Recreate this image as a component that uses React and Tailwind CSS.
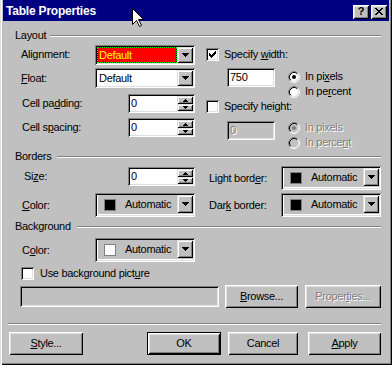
import React from "react";

const FONT = "font-['Liberation_Sans',Arial,sans-serif]";
const SUNKEN =
  "shadow-[inset_1px_1px_0_#808080,inset_-1px_-1px_0_#ffffff,inset_2px_2px_0_#000000,inset_-2px_-2px_0_#dfdfdf]";
const RAISED =
  "shadow-[inset_1px_1px_0_#ffffff,inset_-1px_-1px_0_#000000,inset_2px_2px_0_#dfdfdf,inset_-2px_-2px_0_#808080]";
const RAISED_SB =
  "shadow-[inset_1px_1px_0_#dfdfdf,inset_-1px_-1px_0_#000000,inset_2px_2px_0_#ffffff,inset_-2px_-2px_0_#808080]";
const DIS = "text-[#808080] [text-shadow:1px_1px_0_#ffffff]";

function DownTri() {
  return (
    <svg width="7" height="4" viewBox="0 0 7 4" className="block">
      <path d="M0 0h7v1H0zM1 1h5v1H1zM2 2h3v1H2zM3 3h1v1H3z" fill="#000" />
    </svg>
  );
}
function SmallUp() {
  return (
    <svg width="5" height="3" viewBox="0 0 5 3" className="block">
      <path d="M2 0h1v1H2zM1 1h3v1H1zM0 2h5v1H0z" fill="#000" />
    </svg>
  );
}
function SmallDown() {
  return (
    <svg width="5" height="3" viewBox="0 0 5 3" className="block">
      <path d="M0 0h5v1H0zM1 1h3v1H1zM2 2h1v1H2z" fill="#000" />
    </svg>
  );
}

function ArrowBtn() {
  return (
    <div className={`w-[16px] self-stretch bg-[#c0c0c0] flex items-center justify-center ${RAISED_SB}`}>
      <DownTri />
    </div>
  );
}

function Combo({ children }) {
  return (
    <div className={`w-[100px] h-[20px] p-[2px] flex shrink-0 ${SUNKEN}`}>
      {children}
      <ArrowBtn />
    </div>
  );
}

function Spin({ value }) {
  return (
    <div className={`w-[67px] h-[19px] p-[2px] flex shrink-0 ${SUNKEN}`}>
      <div className="flex-1 bg-white flex items-center pl-[1px]">{value}</div>
      <div className="w-[16px] flex flex-col">
        <div className={`h-[8px] bg-[#c0c0c0] flex items-center justify-center ${RAISED_SB}`}>
          <SmallUp />
        </div>
        <div className={`h-[7px] bg-[#c0c0c0] flex items-center justify-center ${RAISED_SB}`}>
          <SmallDown />
        </div>
      </div>
    </div>
  );
}

function ColorCombo({ swatch }) {
  return (
    <div className={`w-[100px] h-[24px] p-[2px] flex shrink-0 ${SUNKEN}`}>
      <div className="flex-1 flex items-center border-l border-b border-white bg-[#c0c0c0]">
        <div className={`w-[12px] h-[12px] ml-[6px] border border-[#808080] ${swatch}`} />
        <span className="ml-[9px]">Automatic</span>
        <div className={`ml-auto self-start w-[16px] h-[18px] bg-[#c0c0c0] flex items-center justify-center ${RAISED_SB}`}>
          <DownTri />
        </div>
      </div>
    </div>
  );
}

function Checkbox({ checked }) {
  return (
    <div className={`w-[13px] h-[13px] shrink-0 bg-white flex items-center justify-center ${SUNKEN}`}>
      {checked && (
        <svg width="7" height="7" viewBox="0 0 7 7" className="block">
          <path
            d="M6 0h1v1H6zM5 1h2v1H5zM0 2h1v1H0zM4 2h3v1H4zM0 3h2v1H0zM3 3h3v1H3zM0 4h5v1H0zM1 5h3v1H1zM2 6h1v1H2z"
            fill="#000"
          />
        </svg>
      )}
    </div>
  );
}

function Radio({ checked, disabled }) {
  return (
    <svg width="12" height="12" viewBox="0 0 12 12" className="block shrink-0">
      <circle cx="6" cy="6" r="4.5" fill={disabled ? "#c0c0c0" : "#ffffff"} />
      <path d="M2.11 9.89A5.5 5.5 0 0 1 9.89 2.11" fill="none" stroke="#808080" strokeWidth="1" />
      <path d="M9.89 2.11A5.5 5.5 0 0 1 2.11 9.89" fill="none" stroke="#ffffff" strokeWidth="1" />
      <path d="M2.82 9.18A4.5 4.5 0 0 1 9.18 2.82" fill="none" stroke="#000000" strokeWidth="1" />
      <path d="M9.18 2.82A4.5 4.5 0 0 1 2.82 9.18" fill="none" stroke="#dfdfdf" strokeWidth="1" />
      {checked && <circle cx="6" cy="6" r="2" fill={disabled ? "#808080" : "#000000"} />}
    </svg>
  );
}

function Line() {
  return <div className="flex-1 h-[2px] bg-[#808080] border-b border-white" />;
}

export default function App() {
  return (
    <div
      className={`relative w-[392px] h-[365px] bg-[#c0c0c0] px-[3px] pb-[3px] flex flex-col ${FONT} text-[11px] leading-[13px] tracking-[-0.3px] text-black shadow-[inset_1px_0_0_#dfdfdf,inset_2px_0_0_#ffffff,inset_-1px_-1px_0_#000000,inset_-2px_-2px_0_#808080]`}
    >
      {/* Title bar */}
      <div className="h-[21px] shrink-0 bg-[#000080] flex items-center pt-[2px] pl-[3px] pr-[2px]">
        <span className="text-white font-bold text-[12px] tracking-[-0.2px]">Table Properties</span>
        <div className="ml-auto flex gap-[2px]">
          <div className={`w-[16px] h-[14px] bg-[#c0c0c0] flex items-center justify-center ${RAISED}`}>
            <span className="font-bold text-[11px] leading-[11px] tracking-normal">?</span>
          </div>
          <div className={`w-[16px] h-[14px] bg-[#c0c0c0] flex items-center justify-center ${RAISED}`}>
            <svg width="8" height="7" viewBox="0 0 8 7" className="block">
              <path
                d="M0 0h2v1H0zM6 0h2v1H6zM1 1h2v1H1zM5 1h2v1H5zM2 2h4v1H2zM3 3h2v1H3zM2 4h4v1H2zM1 5h2v1H1zM5 5h2v1H5zM0 6h2v1H0zM6 6h2v1H6z"
                fill="#000"
              />
            </svg>
          </div>
        </div>
      </div>

      {/* Layout header */}
      <div className="mt-[8px] h-[13px] flex items-center pl-[12px] pr-[8px]">
        <span>Layout</span>
        <div className="ml-[4px] flex-1 flex">
          <Line />
        </div>
      </div>

      {/* Layout body */}
      <div className="mt-[3px] pl-[18px] flex">
        <div className="w-[174px] flex flex-col">
          <div className="h-[20px] flex items-center">
            <span className="w-[74px] -mt-[2px]">Alignment:</span>
            <Combo>
              <div className="flex-1 flex bg-black border border-dotted border-[#00ff00]">
                <div className="flex-1 bg-[#ff0000] text-[#ffff00] flex items-center pl-[1px]">Default</div>
              </div>
            </Combo>
          </div>
          <div className="mt-[3px] h-[20px] flex items-center">
            <span className="w-[74px]">
              <u>F</u>loat:
            </span>
            <Combo>
              <div className="flex-1 bg-white flex items-center pl-[2px]">Default</div>
            </Combo>
          </div>
          <div className="mt-[6px] h-[19px] flex items-center">
            <span className="w-[107px] pl-[1px]">
              Cell pa<u>d</u>ding:
            </span>
            <Spin value="0" />
          </div>
          <div className="mt-[5px] h-[19px] flex items-center">
            <span className="w-[107px] pl-[1px]">
              Cell s<u>p</u>acing:
            </span>
            <Spin value="0" />
          </div>
        </div>

        <div className="ml-[11px] flex flex-col">
          <div className="mt-[3px] h-[13px] flex items-center">
            <Checkbox checked />
            <span className="ml-[5px]">
              Specify <u>w</u>idth:
            </span>
          </div>
          <div className="mt-[7px] flex items-start">
            <div className={`ml-[21px] w-[48px] h-[19px] p-[2px] ${SUNKEN}`}>
              <div className="h-full bg-white flex items-center pl-[1px]">750</div>
            </div>
            <div className="ml-[13px] mt-[1px] flex flex-col">
              <div className="h-[15px] flex items-center">
                <Radio checked />
                <span className="ml-[5px]">
                  In pi<u>x</u>els
                </span>
              </div>
              <div className="h-[15px] flex items-center">
                <Radio />
                <span className="ml-[5px]">
                  In pe<u>r</u>cent
                </span>
              </div>
            </div>
          </div>
          <div className="mt-[1px] h-[13px] flex items-center">
            <Checkbox />
            <span className="ml-[5px]">Specify height:</span>
          </div>
          <div className="mt-[7px] flex items-start">
            <div className={`ml-[21px] mt-[1px] w-[48px] h-[19px] p-[2px] ${SUNKEN}`}>
              <div className={`h-full bg-[#c0c0c0] flex items-center pl-[1px] ${DIS}`}>0</div>
            </div>
            <div className="ml-[13px] flex flex-col">
              <div className="h-[15px] flex items-center">
                <Radio checked disabled />
                <span className={`ml-[5px] ${DIS}`}>In pixels</span>
              </div>
              <div className="h-[15px] flex items-center">
                <Radio disabled />
                <span className={`ml-[5px] ${DIS}`}>
                  In perce<u>n</u>t
                </span>
              </div>
            </div>
          </div>
        </div>
      </div>

      {/* Borders header */}
      <div className="h-[13px] flex items-center pl-[12px] pr-[8px]">
        <span>Borders</span>
        <div className="ml-[6px] flex-1 flex">
          <Line />
        </div>
      </div>

      {/* Borders body */}
      <div className="mt-[3px] pl-[18px] flex">
        <div className="w-[174px] flex flex-col">
          <div className="h-[24px] flex items-start">
            <span className="w-[107px] pl-[3px] mt-[1px] h-[19px] flex items-center">
              Si<u>z</u>e:
            </span>
            <div className="mt-[1px]">
              <Spin value="0" />
            </div>
          </div>
          <div className="mt-[3px] h-[24px] flex items-center">
            <span className="w-[74px] pl-[1px]">
              <u>C</u>olor:
            </span>
            <ColorCombo swatch="bg-black" />
          </div>
        </div>
        <div className="ml-[14px] flex flex-col">
          <div className="h-[24px] flex items-center">
            <span className="w-[72px]">
              Light bord<u>e</u>r:
            </span>
            <ColorCombo swatch="bg-black" />
          </div>
          <div className="mt-[3px] h-[24px] flex items-center">
            <span className="w-[72px]">
              Dar<u>k</u> border:
            </span>
            <ColorCombo swatch="bg-black" />
          </div>
        </div>
      </div>

      {/* Background header */}
      <div className="mt-[3px] h-[13px] flex items-center pl-[12px] pr-[8px]">
        <span>Background</span>
        <div className="ml-[6px] flex-1 flex">
          <Line />
        </div>
      </div>

      {/* Background body */}
      <div className="mt-[5px] pl-[18px] flex flex-col">
        <div className="h-[24px] flex items-center">
          <span className="w-[74px] pl-[1px]">
            C<u>o</u>lor:
          </span>
          <ColorCombo swatch="bg-white" />
        </div>
        <div className="mt-[5px] h-[13px] flex items-center">
          <Checkbox />
          <span className="ml-[6px]">
            Use background pict<u>u</u>re
          </span>
        </div>
        <div className="mt-[5px] h-[23px] flex items-center">
          <div className={`-ml-[1px] w-[199px] h-[21px] p-[2px] ${SUNKEN}`}>
            <div className="h-full bg-[#c0c0c0]" />
          </div>
          <div className={`ml-[6px] w-[73px] h-[23px] flex items-center justify-center ${RAISED}`}>
            <span>
              <u>B</u>rowse...
            </span>
          </div>
          <div className={`ml-[7px] w-[76px] h-[23px] flex items-center justify-center ${RAISED}`}>
            <span className={DIS}>
              Proper<u>t</u>ies...
            </span>
          </div>
        </div>
      </div>

      {/* Separator */}
      <div className="mt-[15px] ml-[5px] mr-[8px] flex">
        <Line />
      </div>

      {/* Buttons */}
      <div className="mt-[7px] h-[23px] flex items-center">
        <div className={`ml-[6px] w-[74px] h-[23px] flex items-center justify-center ${RAISED}`}>
          <span>
            <u>S</u>tyle...
          </span>
        </div>
        <div className="ml-[64px] w-[74px] h-[23px] border border-black">
          <div className={`h-full flex items-center justify-center ${RAISED}`}>OK</div>
        </div>
        <div className={`ml-[7px] w-[70px] h-[23px] flex items-center justify-center ${RAISED}`}>Cancel</div>
        <div className={`ml-[10px] w-[73px] h-[23px] flex items-center justify-center ${RAISED}`}>
          <span>
            <u>A</u>pply
          </span>
        </div>
      </div>

      {/* Mouse cursor overlay */}
      <svg
        width="13"
        height="20"
        viewBox="0 0 13 20"
        className="absolute left-[132px] top-[8px] pointer-events-none"
      >
        <polygon
          points="0.5,0.5 0.5,16.5 4.5,12.5 7.5,18.5 9.5,17.5 6.5,11.5 11.5,11.5"
          fill="#ffffff"
          stroke="#000000"
          strokeWidth="1"
          strokeLinejoin="miter"
        />
      </svg>
    </div>
  );
}
